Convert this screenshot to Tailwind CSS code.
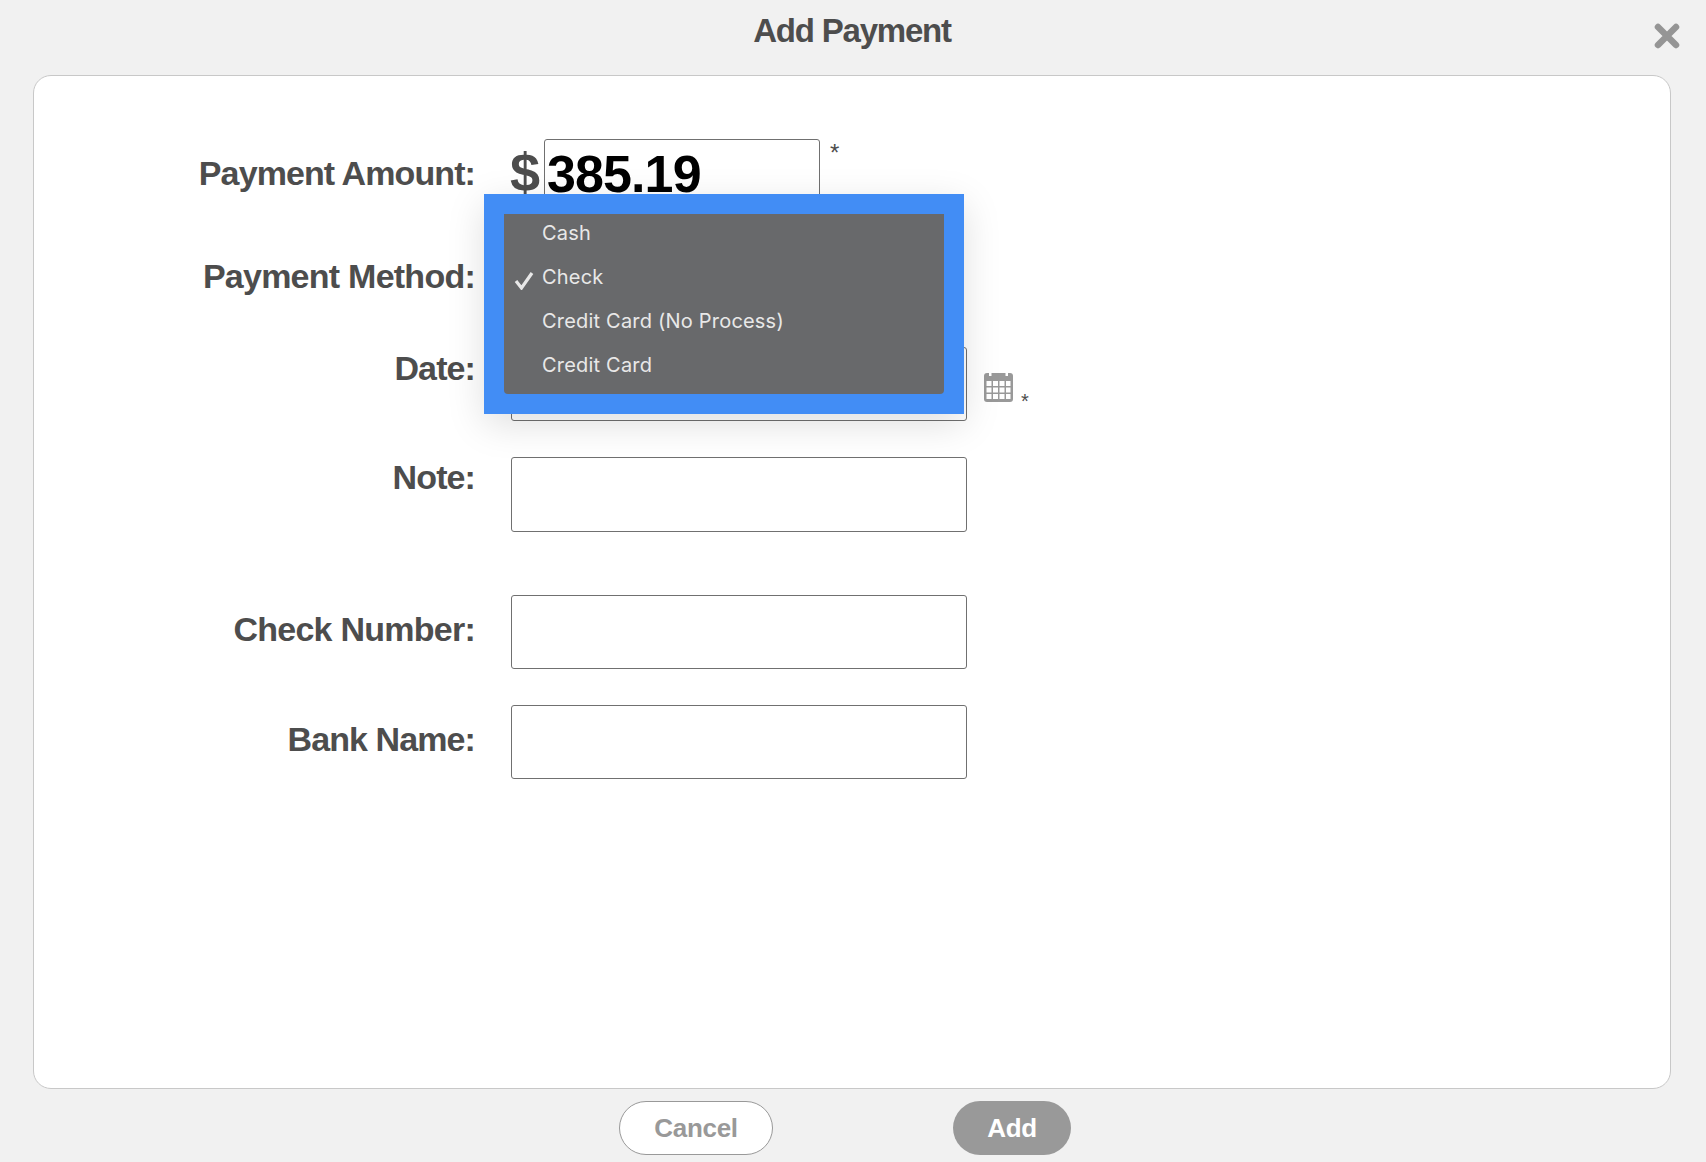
<!DOCTYPE html>
<html lang="en">

<head>
    <meta charset="UTF-8">
    <meta name="viewport" content="width=device-width, initial-scale=1.0">
    <title>Add Payment</title>
    <script src="https://cdn.jsdelivr.net/npm/@tailwindcss/browser@4"></script>
</head>

<body class="bg-[#f1f1f1] h-screen overflow-hidden font-['Liberation_Sans',Arial,sans-serif]">
    <!-- Header -->
    <div class="relative h-[75px] text-center">
        <h1 class="pt-[12px] pr-[2px] text-[33px] leading-[38px] font-bold text-[#4d4d4d] tracking-[-1.2px]">Add Payment</h1>
        <button type="button" class="absolute left-[1654px] top-[23px] w-[26px] h-[26px]">
            <svg viewBox="0 0 26 26" class="w-[26px] h-[26px]" fill="none" stroke="#959595" stroke-width="6.5" stroke-linecap="round">
                <path d="M4 4 L22 22 M22 4 L4 22" />
            </svg>
        </button>
    </div>

    <!-- Card -->
    <div class="relative mx-[33px] w-[1638px] h-[1014px] bg-white border border-[#c8c8c8] rounded-[18px] pt-[63px]">
        <div class="flex items-start">
            <label class="w-[441px] mt-[15px] text-right text-[34px] leading-[38px] font-bold text-[#4d4d4d] tracking-[-0.9px]">Payment Amount:</label>
            <span class="ml-[35px] w-[34px] mt-[3px] text-[54px] leading-[60px] font-bold text-[#4d4d4d]">$</span>
            <input type="text" value="385.19"
                class="w-[276px] h-[74px] px-[2px] pb-[4px] border border-[#707070] rounded-[3px] text-[52px] font-bold text-black outline-none tracking-[-0.9px]" />
            <span class="ml-[10px] mt-[2px] text-[24px] leading-[24px] text-[#4d4d4d]">*</span>
        </div>

        <div class="flex items-start mt-[30px]">
            <label class="w-[441px] mt-[14px] text-right text-[34px] leading-[38px] font-bold text-[#4d4d4d] tracking-[-0.75px]">Payment Method:</label>
            <select class="ml-[36px] w-[400px] h-[68px] border border-[#707070] rounded-[3px] text-[24px] appearance-none">
                <option>Check</option>
            </select>
        </div>

        <div class="flex items-start mt-[36px]">
            <label class="w-[441px] mt-[2px] text-right text-[34px] leading-[38px] font-bold text-[#4d4d4d] tracking-[-0.9px]">Date:</label>
            <input type="text" class="ml-[36px] w-[456px] h-[74px] border border-[#707070] rounded-[3px]" />
            <svg viewBox="0 0 29 30" class="ml-[17px] mt-[25px] w-[29px] h-[30px]">
                <rect x="0" y="1" width="29" height="29" rx="3" fill="#999999" />
                <rect x="5" y="0" width="2.5" height="4" fill="#ffffff" />
                <rect x="21.5" y="0" width="2.5" height="4" fill="#ffffff" />
                <g fill="#ffffff">
                    <rect x="2.5" y="9" width="5" height="5" /><rect x="9" y="9" width="5" height="5" /><rect x="15.5" y="9" width="5" height="5" /><rect x="22" y="9" width="4.5" height="5" />
                    <rect x="2.5" y="15.5" width="5" height="5" /><rect x="9" y="15.5" width="5" height="5" /><rect x="15.5" y="15.5" width="5" height="5" /><rect x="22" y="15.5" width="4.5" height="5" />
                    <rect x="2.5" y="22" width="5" height="5" /><rect x="9" y="22" width="5" height="5" /><rect x="15.5" y="22" width="5" height="5" /><rect x="22" y="22" width="4.5" height="5" />
                </g>
            </svg>
            <span class="ml-[8px] mt-[44px] text-[20px] leading-[20px] text-[#4d4d4d]">*</span>
        </div>

        <div class="flex items-start mt-[36px]">
            <label class="w-[441px] mt-[1px] text-right text-[34px] leading-[38px] font-bold text-[#4d4d4d] tracking-[-0.9px]">Note:</label>
            <input type="text" class="ml-[36px] w-[456px] h-[75px] border border-[#707070] rounded-[3px]" />
        </div>

        <div class="flex items-start mt-[63px]">
            <label class="w-[441px] mt-[15px] text-right text-[34px] leading-[38px] font-bold text-[#4d4d4d] tracking-[-0.75px]">Check Number:</label>
            <input type="text" class="ml-[36px] w-[456px] h-[74px] border border-[#707070] rounded-[3px]" />
        </div>

        <div class="flex items-start mt-[36px]">
            <label class="w-[441px] mt-[15px] text-right text-[34px] leading-[38px] font-bold text-[#4d4d4d] tracking-[-0.9px]">Bank Name:</label>
            <input type="text" class="ml-[36px] w-[456px] h-[74px] border border-[#707070] rounded-[3px]" />
        </div>

        <!-- Native select popup with focus highlight -->
        <div class="absolute left-[450px] top-[118px] w-[480px] h-[220px] p-5 bg-[#428df5] shadow-[0_10px_36px_rgba(0,0,0,0.13)]">
            <ul class="h-[180px] bg-[#68696b] rounded-b-[4px] font-['Inter',sans-serif] text-[20px] leading-[38px] text-[#e8e8e8] tracking-[0.2px]">
                <li class="h-[44px] pl-[38px]">Cash</li>
                <li class="relative h-[44px] pl-[38px]">
                    <svg viewBox="0 0 20 18" class="absolute left-[10px] top-[14px] w-[20px] h-[18px]" fill="none" stroke="#e8e8e8" stroke-width="3.2">
                        <path d="M2 9 L7.5 16 L18 1" />
                    </svg>
                    Check
                </li>
                <li class="h-[44px] pl-[38px]">Credit Card (No Process)</li>
                <li class="h-[44px] pl-[38px]">Credit Card</li>
            </ul>
        </div>
    </div>

    <!-- Footer buttons -->
    <div class="flex pl-[619px] pt-[12px] gap-[180px]">
        <button type="button" class="w-[154px] h-[54px] rounded-full bg-white border border-[#999999] text-[26px] font-bold text-[#999999] tracking-[-0.3px]">Cancel</button>
        <button type="button" class="w-[118px] h-[54px] rounded-full bg-[#999999] text-[26px] font-bold text-white tracking-[-0.3px]">Add</button>
    </div>
</body>

</html>
